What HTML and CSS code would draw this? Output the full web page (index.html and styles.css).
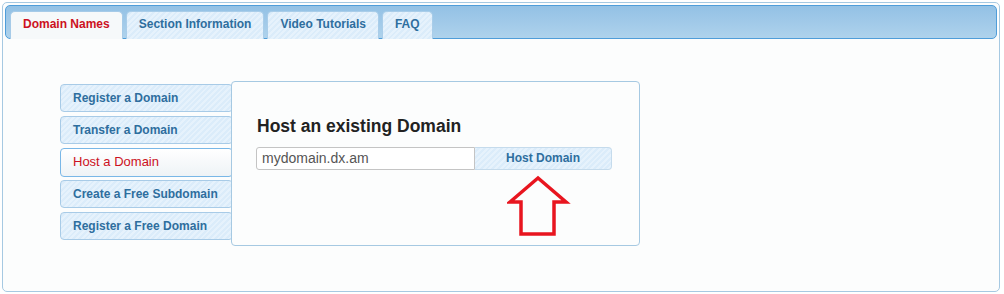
FILE: index.html
```html
<!DOCTYPE html>
<html>
<head>
<meta charset="utf-8">
<link rel="stylesheet" href="styles.css">
</head>
<body>
<div class="panel">
  <ul class="tabs">
    <li class="tab active">Domain Names</li>
    <li class="tab">Section Information</li>
    <li class="tab">Video Tutorials</li>
    <li class="tab">FAQ</li>
  </ul>
  <div class="content">
    <ul class="menu">
      <li class="item">Register a Domain</li>
      <li class="item">Transfer a Domain</li>
      <li class="item active">Host a Domain</li>
      <li class="item">Create a Free Subdomain</li>
      <li class="item">Register a Free Domain</li>
    </ul>
    <div class="box">
      <h2 class="title">Host an existing Domain</h2>
      <div class="form">
        <div class="input">mydomain.dx.am</div>
        <div class="button">Host Domain</div>
      </div>
      <svg class="arrow" width="64" height="64" viewBox="0 0 64 64">
        <polygon points="31,3 3,27 14,27 14,59 47,59 47,27 59,27" fill="none" stroke="#e8151f" stroke-width="3.5" stroke-linejoin="miter"/>
      </svg>
    </div>
  </div>
</div>
</body>
</html>
```

FILE: styles.css
```css
* { box-sizing: border-box; }
html, body { margin: 0; background: #fff; }
body {
  padding: 2px 4px 2px 2px;
  font-family: "Liberation Sans", Arial, sans-serif;
}
.panel {
  height: 290px;
  border: 1px solid #a6c9e2;
  border-radius: 5px;
  background: #fcfdfd;
  padding: 2px;
}
.tabs {
  list-style: none;
  margin: 0;
  padding: 5px 4px 0 4px;
  display: flex;
  gap: 3px;
  border: 1px solid #4f9dd9;
  border-radius: 5px;
  background: linear-gradient(#93c1e5, #aed2ec);
  height: 34px;
}
.tab {
  height: 28px;
  margin-bottom: -1px;
  padding: 0 12px;
  border: 1px solid #a9cde9;
  border-bottom: none;
  border-radius: 5px 5px 0 0;
  font-size: 12px;
  font-weight: bold;
  line-height: 25px;
  color: #2e6e9e;
  background: repeating-linear-gradient(135deg, #e6f2fc 0 2px, #dbecfa 2px 4px);
}
.tab.active {
  background: #f6f9fa;
  color: #cc1122;
  border-color: #a6cbe8;
}
.content {
  display: flex;
  align-items: flex-start;
  padding: 42px 0 0 55px;
}
.menu {
  list-style: none;
  margin: 3px -2px 0 0;
  padding: 0;
  width: 173px;
  display: flex;
  flex-direction: column;
  gap: 4px;
}
.item {
  height: 28px;
  padding-left: 12px;
  border: 1px solid #a8cbe7;
  border-radius: 4px;
  font-size: 12px;
  font-weight: bold;
  line-height: 26px;
  color: #2e6e9e;
  background: repeating-linear-gradient(135deg, #e6f2fc 0 2px, #dbecfa 2px 4px);
}
.item.active {
  height: 29px;
  margin-bottom: -1px;
  border-color: #79b7e7;
  color: #cc1122;
  font-weight: normal;
  font-size: 13px;
  background: linear-gradient(#ffffff, #eef3f6);
}
.box {
  position: relative;
  z-index: 1;
  width: 409px;
  height: 165px;
  border: 1px solid #a6c9e2;
  border-radius: 4px;
  background: #fcfdfd;
  padding: 34px 0 0 25px;
}
.title {
  margin: 0;
  font-size: 17.5px;
  line-height: 21px;
  font-weight: bold;
  color: #222;
}
.form {
  display: flex;
  margin: 10px 0 0 -1px;
  height: 23px;
}
.input {
  width: 219px;
  border: 1px solid #c4c4c4;
  border-radius: 3px 0 0 3px;
  background: #fff;
  padding-left: 5px;
  font-size: 14px;
  line-height: 21px;
  color: #555;
}
.button {
  width: 137px;
  border: 1px solid #c5dbec;
  border-left: none;
  border-radius: 0 4px 4px 0;
  background: repeating-linear-gradient(135deg, #e6f2fc 0 2px, #dbecfa 2px 4px);
  text-align: center;
  font-size: 12px;
  font-weight: bold;
  line-height: 21px;
  color: #2e6e9e;
}
.arrow {
  display: block;
  margin: 5px 0 0 250px;
}
```
